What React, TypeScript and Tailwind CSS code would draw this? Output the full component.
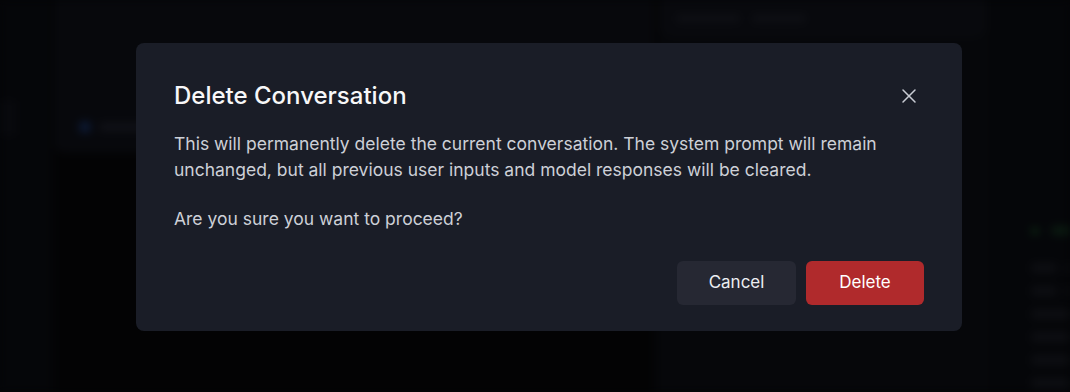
import React from "react";
import { X } from "lucide-react";

function Background() {
  return (
    <div className="flex h-[392px] w-[1070px] bg-[#040507] blur-[4px]">
      <div className="flex w-[52px] shrink-0 flex-col border-r border-[#020203] bg-[#050609]">
        <div className="mt-[100px] h-[36px] w-[16px] rounded bg-[#08090d]" />
      </div>
      <div className="flex w-[604px] shrink-0 flex-col bg-[#040507] px-[4px]">
        <div className="h-[152px] rounded-b-lg border border-[#0b0c11] bg-[#07080c] px-[22px] pt-[120px]">
          <div className="flex items-center gap-2">
            <div className="h-[12px] w-[12px] rounded-full bg-[#0d1a36]" />
            <div className="h-[8px] w-[50px] rounded bg-[#111218]" />
          </div>
        </div>
        <div className="flex-1 bg-[#030304]" />
      </div>
      <div className="flex w-[334px] shrink-0 flex-col border-l border-[#020203] bg-[#06070a] px-[6px]">
        <div className="h-[36px] rounded-b-lg border border-[#0e0f14] bg-[#08090d] px-[12px] pt-[14px]">
          <div className="flex gap-3">
            <div className="h-[7px] w-[64px] rounded bg-[#0f1015]" />
            <div className="h-[7px] w-[54px] rounded bg-[#0f1015]" />
          </div>
        </div>
      </div>
      <div className="flex min-w-0 flex-1 flex-col overflow-hidden border-l border-[#040406] bg-[#050609] pl-[40px]">
        <div className="mt-[226px] flex items-center gap-3">
          <div className="h-[8px] w-[8px] shrink-0 rounded-full bg-[#0a2411]" />
          <div className="h-[9px] w-[60px] shrink-0 rounded bg-[#0a1a10]" />
        </div>
        <div className="mt-[28px] flex flex-col gap-[13px]">
          <div className="flex gap-2">
            <div className="h-[10px] w-[26px] shrink-0 rounded bg-[#0d0e12]" />
            <div className="h-[10px] w-[40px] shrink-0 rounded bg-[#0d0e12]" />
          </div>
          <div className="flex gap-2">
            <div className="h-[10px] w-[26px] shrink-0 rounded bg-[#0d0e12]" />
            <div className="h-[10px] w-[40px] shrink-0 rounded bg-[#0d0e12]" />
          </div>
          <div className="h-[10px] w-[60px] shrink-0 rounded bg-[#0d0e12]" />
          <div className="h-[10px] w-[60px] shrink-0 rounded bg-[#0d0e12]" />
          <div className="h-[10px] w-[60px] shrink-0 rounded bg-[#0d0e12]" />
          <div className="h-[10px] w-[60px] shrink-0 rounded bg-[#0d0e12]" />
        </div>
      </div>
    </div>
  );
}

export default function App() {
  return (
    <div
      className="relative h-[392px] w-[1070px] overflow-hidden bg-[#040507]"
      style={{ fontFamily: "Inter, 'Noto Sans', sans-serif" }}
    >
      <Background />
      <div className="absolute left-[136px] top-[43px] flex h-[288px] w-[826px] flex-col rounded-lg bg-[#1a1d27] px-[38px] pb-[26px] pt-[38px]">
        <div className="flex items-center justify-between">
          <h2 className="text-[24px] font-medium leading-[30px] text-[#f7f7f8]">
            Delete Conversation
          </h2>
          <button className="flex h-[30px] w-[30px] items-center justify-center text-[#c9ccd4]">
            <X size={24} strokeWidth={1.5} />
          </button>
        </div>
        <div className="mt-[20px] text-[17.5px] leading-[26px] text-[#cdd0d7]">
          <p>
            This will permanently delete the current conversation. The system prompt will remain
            unchanged, but all previous user inputs and model responses will be cleared.
          </p>
          <p className="mt-[23px]">Are you sure you want to proceed?</p>
        </div>
        <div className="mt-auto flex justify-end gap-[10px]">
          <button className="h-[44px] w-[119px] rounded-md bg-[#262833] text-[17px] text-[#eceef2]">
            Cancel
          </button>
          <button className="h-[44px] w-[118px] rounded-md bg-[#b02a2c] text-[17px] text-white">
            Delete
          </button>
        </div>
      </div>
    </div>
  );
}
